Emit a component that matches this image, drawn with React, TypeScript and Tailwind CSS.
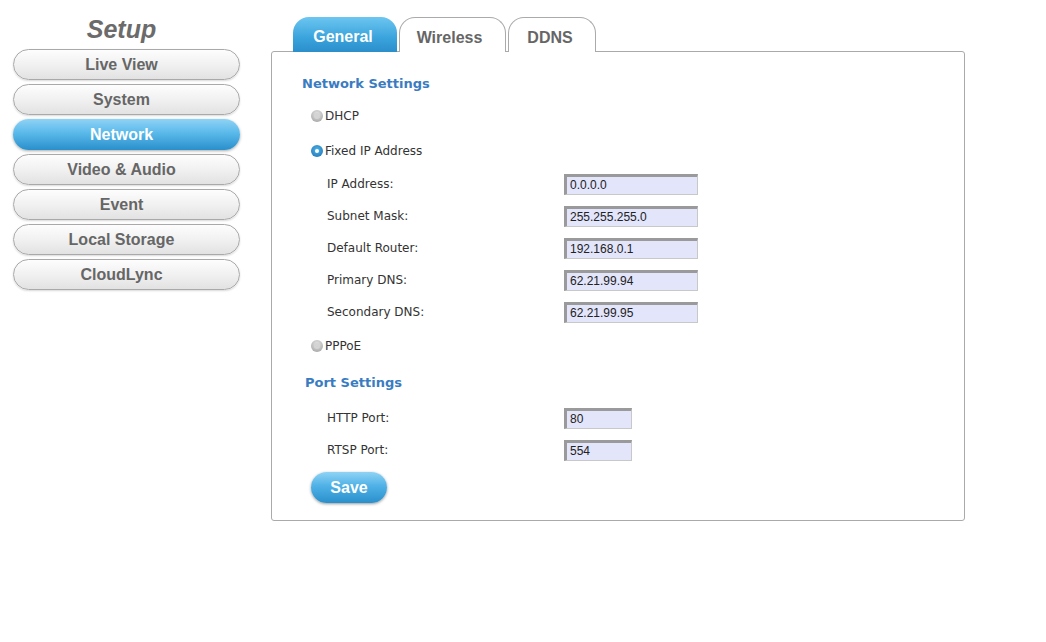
import React from "react";

const menu = ["Live View", "System", "Network", "Video & Audio", "Event", "Local Storage", "CloudLync"];

function Radio({ checked }: { checked?: boolean }) {
  return checked ? (
    <span className="inline-block w-[12px] h-[12px] rounded-full bg-[radial-gradient(circle_at_50%_40%,#4fb3ea,#1a6fb0)] relative">
      <span className="absolute left-[4px] top-[4px] w-[4px] h-[4px] rounded-full bg-white" />
    </span>
  ) : (
    <span className="inline-block w-[12px] h-[12px] rounded-full bg-[radial-gradient(circle_at_50%_35%,#e8e8e8,#9a9a9a)] relative">
      <span className="absolute left-[3px] top-[3px] w-[6px] h-[6px] rounded-full bg-[#d4d4d4]" />
    </span>
  );
}

function Field({ label, value, w }: { label: string; value: string; w: string }) {
  return (
    <div className="flex items-center h-[32px]">
      <div className="w-[262px] pl-[25px] text-[12px] text-[#333]">{label}</div>
      <div
        className={`${w} h-[21px] bg-[#e3e5fb] border-t-[3px] border-l-[3px] border-r border-b border-t-[#9a9a9a] border-l-[#9a9a9a] border-r-[#c8c8c8] border-b-[#c8c8c8] pl-[3px] text-[12px] leading-[17px] text-[#222] font-['Liberation_Sans',Arial,sans-serif]`}
      >
        {value}
      </div>
    </div>
  );
}

export default function App() {
  return (
    <div className="w-[1046px] h-[642px] bg-white flex font-['DejaVu_Sans',Verdana,sans-serif]">
      <div className="w-[271px] pl-[13px] pt-[14px]">
        <div className="w-[227px] pr-[10px] text-center text-[25px] leading-[30px] font-bold italic text-[#6b6b6b] font-['Liberation_Sans',Arial,sans-serif]">
          Setup
        </div>
        <div className="flex flex-col gap-[4px] mt-[5px]">
          {menu.map((m) =>
            m === "Network" ? (
              <div
                key={m}
                className="w-[227px] h-[31px] pr-[10px] rounded-full bg-[linear-gradient(#8fd3f5,#5ab9ea_45%,#2a8fcb)] shadow-[0_1px_3px_rgba(0,0,0,0.35)] flex items-center justify-center text-white text-[16px] font-bold font-['Liberation_Sans',Arial,sans-serif]"
              >
                {m}
              </div>
            ) : (
              <div
                key={m}
                className="w-[227px] h-[31px] pr-[10px] rounded-full border border-[#a9a9a9] bg-[linear-gradient(#fdfdfd,#f1f1f1_50%,#e2e2e2)] shadow-[0_1px_2px_rgba(0,0,0,0.15)] flex items-center justify-center text-[#666] text-[16px] font-bold font-['Liberation_Sans',Arial,sans-serif]"
              >
                {m}
              </div>
            )
          )}
        </div>
      </div>
      <div className="pt-[17px]">
        <div className="flex items-end pl-[22px] gap-[2px] h-[35px] relative z-10">
          <div className="w-[104px] h-[35px] pr-[4px] rounded-t-[16px] bg-[linear-gradient(#6cc6f1,#3aa3dc_60%,#2b8ecb)] flex items-center justify-center pt-[5px] text-white text-[16px] font-bold font-['Liberation_Sans',Arial,sans-serif]">
            General
          </div>
          <div className="w-[107px] h-[35px] pr-[6px] rounded-t-[16px] border border-b-0 border-[#aaa] bg-white flex items-center justify-center pt-[5px] text-[#666] text-[16px] font-bold font-['Liberation_Sans',Arial,sans-serif]">
            Wireless
          </div>
          <div className="w-[88px] h-[35px] pr-[4px] rounded-t-[16px] border border-b-0 border-[#aaa] bg-white flex items-center justify-center pt-[5px] text-[#666] text-[16px] font-bold font-['Liberation_Sans',Arial,sans-serif]">
            DDNS
          </div>
        </div>
        <div className="w-[694px] h-[470px] -mt-px border border-[#aaa] rounded-[3px] pl-[30px] pt-[24px]">
          <div className="text-[13px] font-bold text-[#3a7cc1] leading-[16px]">Network Settings</div>
          <div className="flex items-center gap-[2px] h-[34px] mt-[7px] pl-[9px] text-[12px] text-[#333]">
            <Radio /> DHCP
          </div>
          <div className="flex items-center gap-[2px] h-[35px] pl-[9px] text-[12px] text-[#333]">
            <Radio checked /> Fixed IP Address
          </div>
          <Field label="IP Address:" value="0.0.0.0" w="w-[134px]" />
          <Field label="Subnet Mask:" value="255.255.255.0" w="w-[134px]" />
          <Field label="Default Router:" value="192.168.0.1" w="w-[134px]" />
          <Field label="Primary DNS:" value="62.21.99.94" w="w-[134px]" />
          <Field label="Secondary DNS:" value="62.21.99.95" w="w-[134px]" />
          <div className="flex items-center gap-[2px] h-[36px] pl-[9px] text-[12px] text-[#333]">
            <Radio /> PPPoE
          </div>
          <div className="text-[13px] font-bold text-[#3a7cc1] leading-[16px] pl-[3px] mt-[11px] mb-[11px]">Port Settings</div>
          <Field label="HTTP Port:" value="80" w="w-[68px]" />
          <Field label="RTSP Port:" value="554" w="w-[68px]" />
          <div className="ml-[9px] mt-[6px] w-[76px] h-[31px] rounded-full bg-[linear-gradient(#8fd3f5,#4fb1e6_45%,#2a8fcb)] shadow-[0_1px_3px_rgba(0,0,0,0.4)] flex items-center justify-center text-white text-[16px] font-bold font-['Liberation_Sans',Arial,sans-serif]">
            Save
          </div>
        </div>
      </div>
    </div>
  );
}
